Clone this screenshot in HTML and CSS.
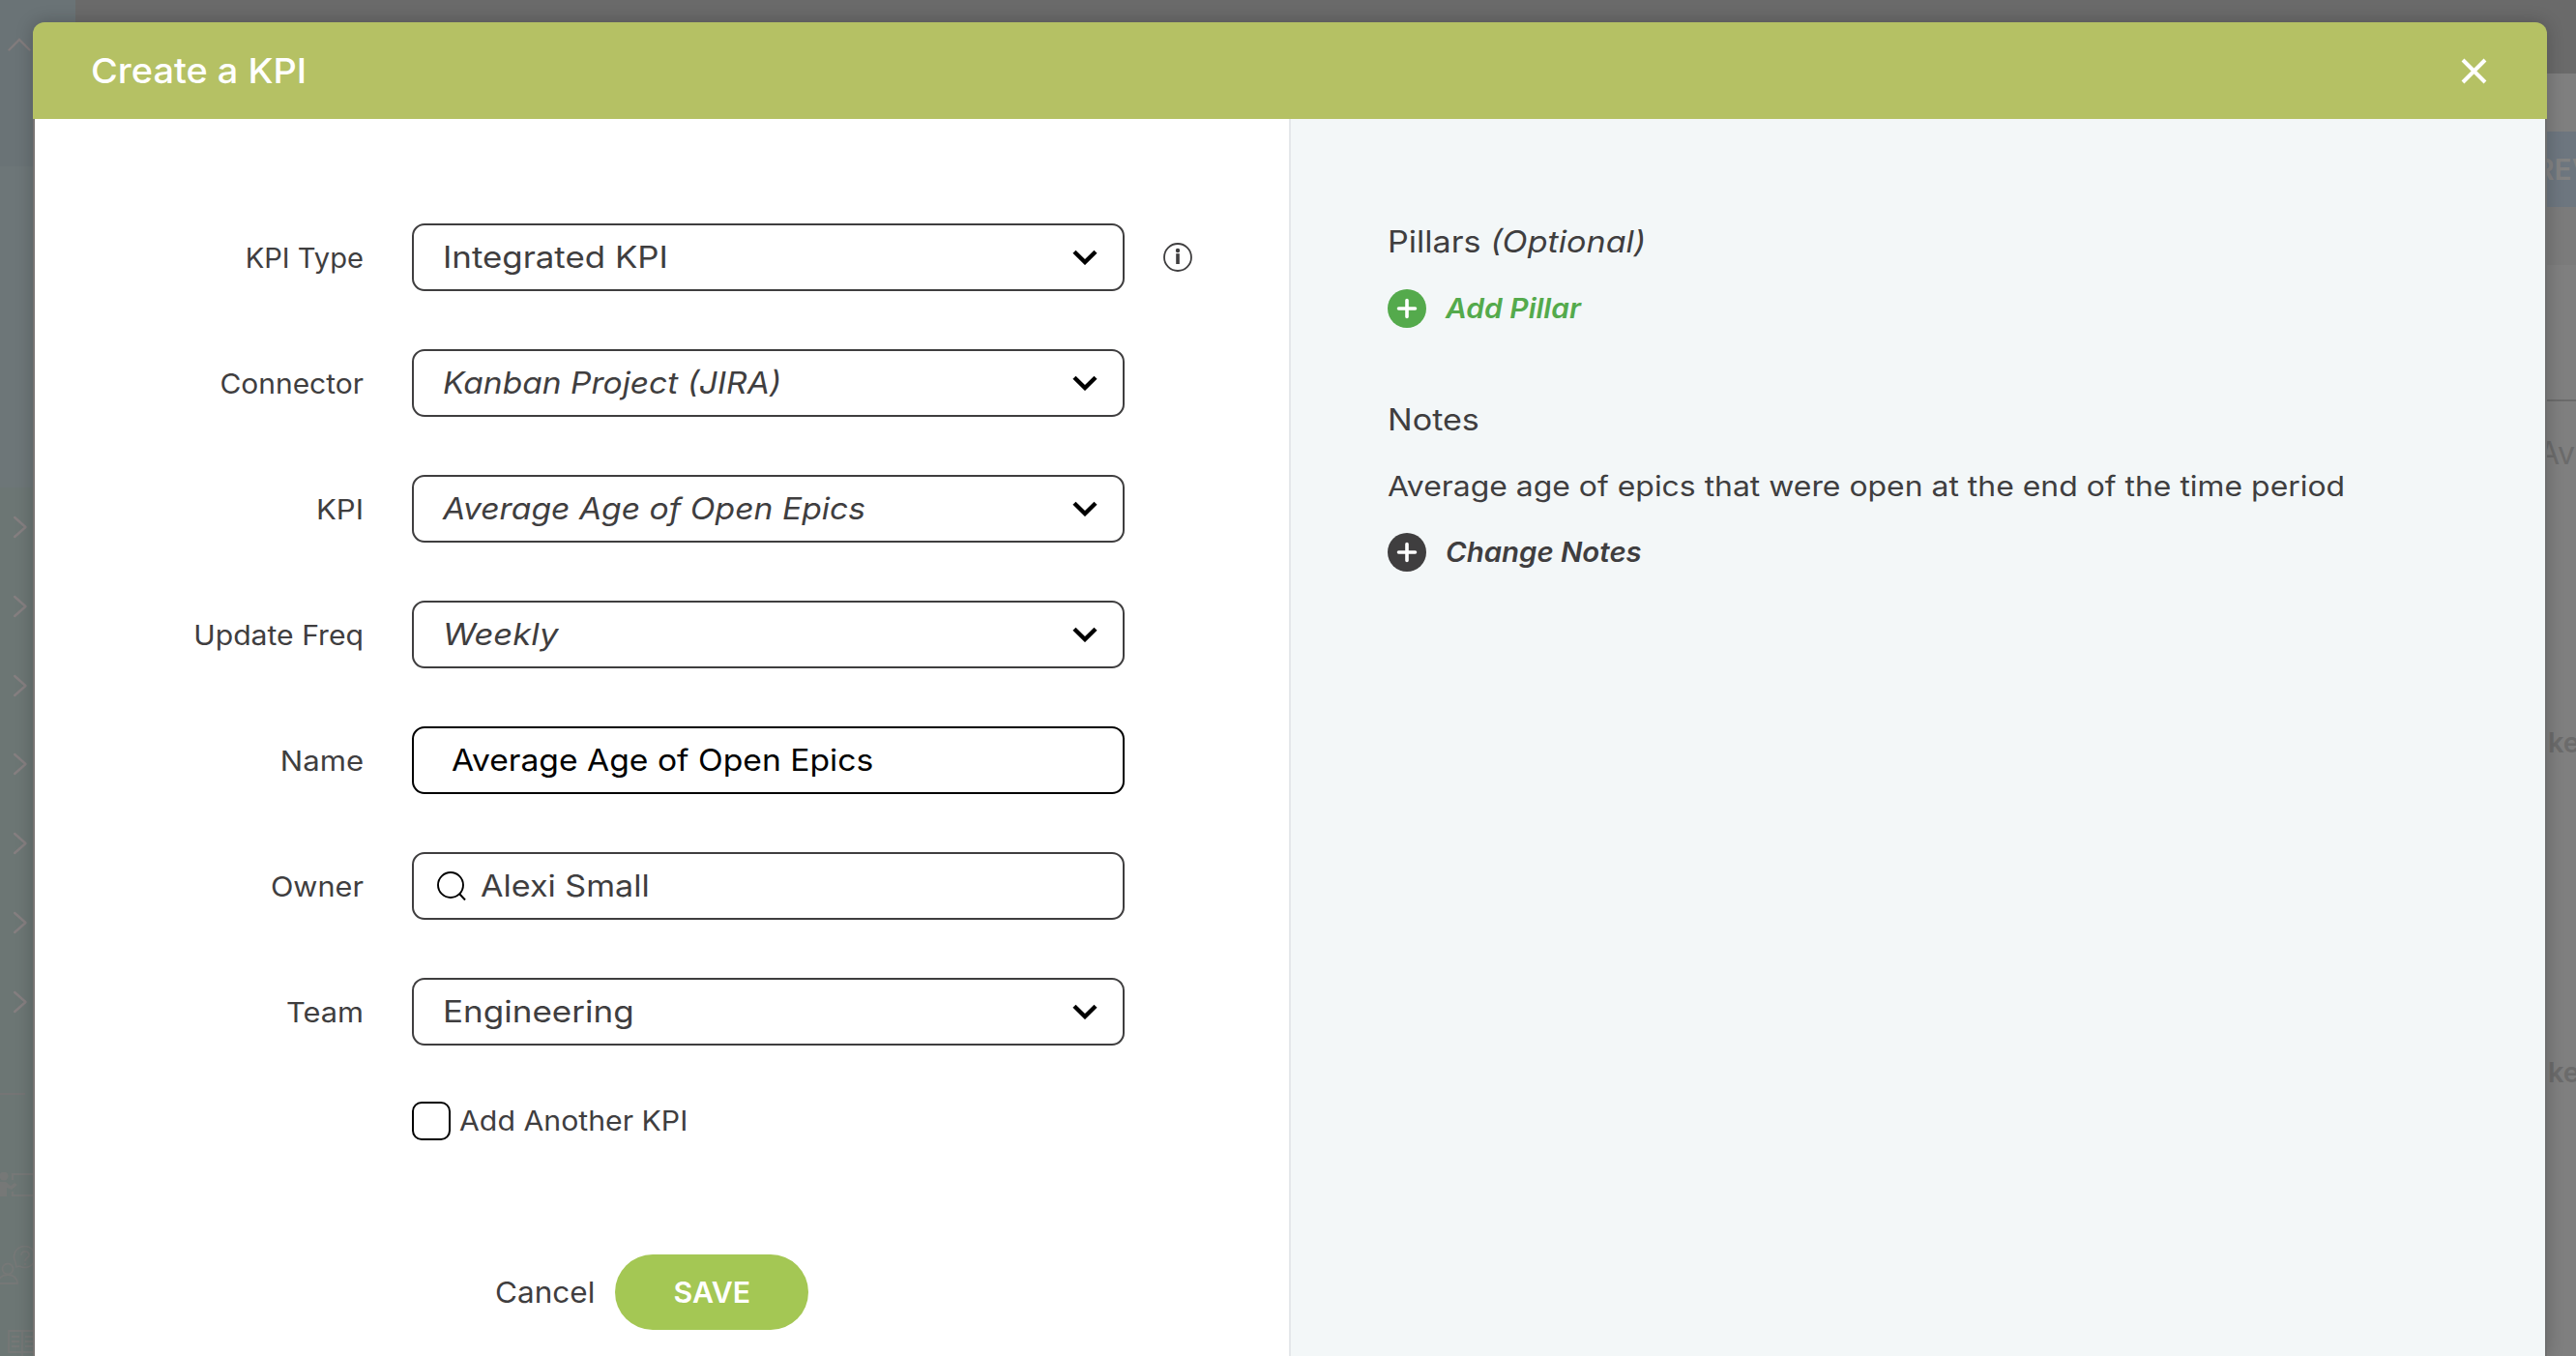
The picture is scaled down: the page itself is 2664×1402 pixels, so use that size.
FILE: index.html
```html
<!DOCTYPE html>
<html lang="en">
<head>
<meta charset="utf-8">
<title>Create a KPI</title>
<link rel="stylesheet" href="styles.css">
</head>
<body>
<svg class="defs" width="0" height="0" aria-hidden="true">
  <symbol id="icon-down" viewBox="0 0 26 16"><path d="M2 2.2 13 13 24 2.2" fill="none" stroke="currentColor" stroke-width="4.4"/></symbol>
  <symbol id="icon-next" viewBox="0 0 14 24"><path d="M1.2 2 12.5 12 1.2 22" fill="none" stroke="currentColor" stroke-width="2.4" stroke-linecap="round" stroke-linejoin="round"/></symbol>
  <symbol id="icon-plus" viewBox="0 0 40 40"><circle cx="20" cy="20" r="20" fill="currentColor"/><path d="M20 11.5v17M11.5 20h17" stroke="#fff" stroke-width="3.6" stroke-linecap="round"/></symbol>
</svg>

<div class="backdrop" aria-hidden="true">
  <aside class="sidebar">
    <div class="side-head"><svg width="24" height="14" viewBox="0 0 24 14"><path d="M1.5 12.5 12 2l10.5 10.5" fill="none" stroke="currentColor" stroke-width="2.4" stroke-linecap="round"/></svg></div>
    <div class="side-mid"></div>
    <nav class="side-nav">
      <svg><use href="#icon-next"/></svg>
      <svg><use href="#icon-next"/></svg>
      <svg><use href="#icon-next"/></svg>
      <svg><use href="#icon-next"/></svg>
      <svg><use href="#icon-next"/></svg>
      <svg><use href="#icon-next"/></svg>
      <svg><use href="#icon-next"/></svg>
    </nav>
    <div class="side-rule"></div>
    <div class="side-tools">
      <svg width="40" height="26" viewBox="0 0 40 26"><circle cx="4" cy="4" r="4.5" fill="currentColor"/><path d="M0 10h6l5 4 4-3 3 2-6 5-5-2v9H0z" fill="currentColor"/><path d="M13 8V2h27M13 20v4h27" fill="none" stroke="currentColor" stroke-width="2.2"/></svg>
      <svg width="40" height="41" viewBox="0 0 40 41"><path d="M17 22l-1-5a11 11 0 1 1 4 4z" fill="none" stroke="currentColor" stroke-width="1.6"/><path d="M22 10c0-6 9-5 8 0 0 2-4 3-4 6M26 18v2" fill="none" stroke="currentColor" stroke-width="1.8"/><circle cx="8" cy="24" r="5.5" fill="none" stroke="currentColor" stroke-width="1.8"/><path d="M-2 39h20c0-12-20-12-20 0z" fill="none" stroke="currentColor" stroke-width="1.8"/></svg>
      <svg class="book" width="40" height="28" viewBox="0 0 40 28"><path d="M9 1h28v22H9zM23 1v27M12 7h8M12 12h8M12 17h8M26 7h9M26 12h9M26 17h9" fill="none" stroke="currentColor" stroke-width="1.8"/></svg>
    </div>
  </aside>
  <div class="page">
    <div class="topbar"></div>
    <div class="subbar"></div>
    <div class="preview">REV</div>
    <div class="strip"></div>
    <div class="board">
      <div class="board-head">Av</div>
      <div class="cell">ke</div>
      <div class="cell">ke</div>
    </div>
  </div>
</div>

<div class="modal" role="dialog">
  <header class="modal-head">
    <h1>Create a KPI</h1>
    <svg class="close" width="27" height="27" viewBox="0 0 27 27"><path d="M2 2l23 23M25 2 2 25" stroke="#fff" stroke-width="4"/></svg>
  </header>
  <div class="modal-body">
    <form class="form">
      <div class="row type"><label>KPI Type</label>
        <div class="box"><span>Integrated KPI</span><svg class="down"><use href="#icon-down"/></svg></div>
        <svg class="info" width="30" height="30" viewBox="0 0 30 30"><circle cx="15" cy="15" r="14" fill="none" stroke="#3f3e3f" stroke-width="1.8"/><circle cx="15" cy="8" r="2.2" fill="#3f3e3f"/><path d="M15 11.2V22" stroke="#3f3e3f" stroke-width="3.6"/></svg>
      </div>
      <div class="row connector"><label>Connector</label>
        <div class="box"><em>Kanban Project (JIRA)</em><svg class="down"><use href="#icon-down"/></svg></div></div>
      <div class="row kpi"><label>KPI</label>
        <div class="box"><em>Average Age of Open Epics</em><svg class="down"><use href="#icon-down"/></svg></div></div>
      <div class="row freq"><label>Update Freq</label>
        <div class="box"><em>Weekly</em><svg class="down"><use href="#icon-down"/></svg></div></div>
      <div class="row name"><label>Name</label>
        <div class="box"><span>Average Age of Open Epics</span></div></div>
      <div class="row owner"><label>Owner</label>
        <div class="box"><svg class="search" width="30" height="30" viewBox="0 0 30 30"><circle cx="14" cy="14" r="13" fill="none" stroke="#000" stroke-width="1.9"/><path d="M23 23l6 6.5" stroke="#000" stroke-width="2"/></svg><span>Alexi Small</span></div></div>
      <div class="row team"><label>Team</label>
        <div class="box"><span>Engineering</span><svg class="down"><use href="#icon-down"/></svg></div></div>
      <div class="another"><i class="check"></i><span>Add Another KPI</span></div>
      <div class="actions"><span class="cancel">Cancel</span><div class="save"><span>SAVE</span></div></div>
    </form>
    <section class="side">
      <h2>Pillars <em>(Optional)</em></h2>
      <div class="add add-pillar"><svg width="40" height="40"><use href="#icon-plus"/></svg><span>Add Pillar</span></div>
      <h2 class="notes">Notes</h2>
      <p>Average age of epics that were open at the end of the time period</p>
      <div class="add change-notes"><svg width="40" height="40"><use href="#icon-plus"/></svg><span>Change Notes</span></div>
    </section>
  </div>
</div>
</body>
</html>
```
FILE: styles.css
```css
* { box-sizing: border-box; }
body {
  margin: 0;
  height: 1402px;
  overflow: hidden;
  position: relative;
  font-family: Inter, "Noto Sans", sans-serif;
  color: #3f3e3f;
  background: #7d7d7d;
}
svg { display: block; flex: none; }
.defs { position: absolute; }

/* Dimmed application behind the dialog */
.backdrop { display: grid; grid-template-columns: 78px 1fr; height: 1402px; overflow: hidden; }
.sidebar { background: #6c7674; color: #706f6e; display: flex; flex-direction: column; }
.side-head { height: 172px; background: #6a7376; padding: 39px 0 0 8px; color: #827c7d; }
.side-mid { height: 332px; background: #6d7678; }
.side-nav { padding: 29px 0 0 14px; display: grid; grid-auto-rows: 81.8px; height: 626px; color: #857f80; }
.side-nav svg { width: 14px; height: 24px; }
.side-rule { width: 26px; height: 2px; background: #757575; }
.side-tools { padding-top: 80px; display: flex; flex-direction: column; gap: 50px; color: #767877; }
.side-tools .book { margin-top: -4px; }
.page { display: flex; flex-direction: column; }
.topbar { height: 76px; background: #6a6a6a; }
.subbar { height: 60px; background: #7f7f7f; }
.preview {
  height: 78px;
  padding-left: 2544px;
  white-space: nowrap;
  overflow: hidden;
  background: #6d767f;
  color: #828282;
  font-size: 30px;
  font-weight: 600;
  line-height: 78px;
}
.strip { height: 60px; background: #7b7b7b; }
.board { flex: 1; background: #7f7f7f; color: #6b6b6b; font-size: 32px; white-space: nowrap; overflow: hidden; }
.board-head { margin-top: 139px; height: 311px; border-top: 2px solid #6b6b6b; padding: 30px 0 0 2547px; line-height: 48px; }
.cell { height: 341px; padding: 24px 0 0 2557px; line-height: 40px; font-size: 29px; font-weight: 600; }

/* Dialog */
.modal { position: absolute; top: 23px; left: 34px; width: 2600px; height: 1379px; border-radius: 12px 12px 0 0; box-shadow: 0 0 18px rgba(0, 0, 0, .22); }
.modal-head {
  height: 100px;
  padding: 0 62px 0 60px;
  display: flex;
  align-items: center;
  justify-content: space-between;
  background: #b5c164;
  border-radius: 12px 12px 0 0;
}
h1 { margin: 0; color: #fff; font-size: 36px; font-weight: 500; transform: scaleX(1.053); transform-origin: left; }
.modal-body {
  height: 1279px;
  display: grid;
  grid-template-columns: 1299px 1fr;
  background: #fff;
  border-left: 2px solid #777372;
  border-right: 2px solid #6e6e6e;
}

.form { padding: 108px 0 0; border-right: 2px solid #e4e7ea; }
.row { display: flex; align-items: center; height: 70px; margin-bottom: 60px; }
.row label { width: 340px; margin-right: 50px; padding-top: 1px; text-align: right; font-size: 28px; white-space: nowrap; transform-origin: right; }
.box {
  width: 737px;
  height: 70px;
  padding: 0 26px 0 30px;
  display: flex;
  align-items: center;
  border: 2px solid #3f3e3f;
  border-radius: 13px;
  font-size: 31px;
  white-space: nowrap;
}
.box span, .box em { margin-top: -2px; transform-origin: left; }
.down { width: 26px; height: 16px; margin-left: auto; color: #000; }
.info { margin-left: 40px; }

.type label { transform: scaleX(1.04); }
.type span { transform: scaleX(1.124); }
.connector label { transform: scaleX(1.07); }
.connector em { transform: scaleX(1.082); }
.kpi label { transform: scaleX(1.11); }
.kpi em { transform: scaleX(1.086); }
.freq label { transform: scaleX(1.077); }
.freq em { transform: scaleX(1.118); }
.name label { transform: scaleX(1.11); }
.name .box { padding-left: 39px; border-color: #000; color: #000; }
.name span { transform: scaleX(1.085); }
.owner label { transform: scaleX(1.095); }
.owner .box { padding-left: 24px; gap: 15px; }
.owner span { transform: scaleX(1.1); }
.team label { transform: scaleX(1.1); }
.team span { transform: scaleX(1.13); }

.another { margin: -2px 0 0 390px; display: flex; align-items: center; height: 40px; gap: 9px; font-size: 28px; }
.another span { transform: scaleX(1.08); transform-origin: left; }
.check { width: 40px; height: 40px; border: 2px solid #000; border-radius: 10px; }
.actions { display: flex; align-items: center; margin: 118px 0 0 476px; font-size: 30px; }
.cancel { width: 124px; transform: scaleX(1.05); transform-origin: left; }
.save { width: 200px; height: 78px; display: grid; place-items: center; border-radius: 39px; background: #a4c754; color: #fff; font-weight: 600; }
.save span { transform: scaleX(1.01); }

.side { background: #f3f7f8; padding: 107px 0 0 100px; }
h2 { margin: 0; font-size: 31px; font-weight: 400; line-height: 40px; transform: scaleX(1.1); transform-origin: left; width: max-content; }
.add { display: flex; align-items: center; gap: 20px; height: 40px; font-size: 28px; font-weight: 600; font-style: italic; }
.add span { transform: scaleX(1.07); transform-origin: left; }
.add-pillar { margin-top: 29px; color: #54aa4c; }
.notes { margin-top: 75px; }
.side p { width: max-content; margin: 29px 0 0; font-size: 29px; line-height: 40px; white-space: nowrap; transform: scaleX(1.1); transform-origin: left; }
.change-notes { margin-top: 28px; }
.change-notes span { transform: scaleX(1.05); }
```
